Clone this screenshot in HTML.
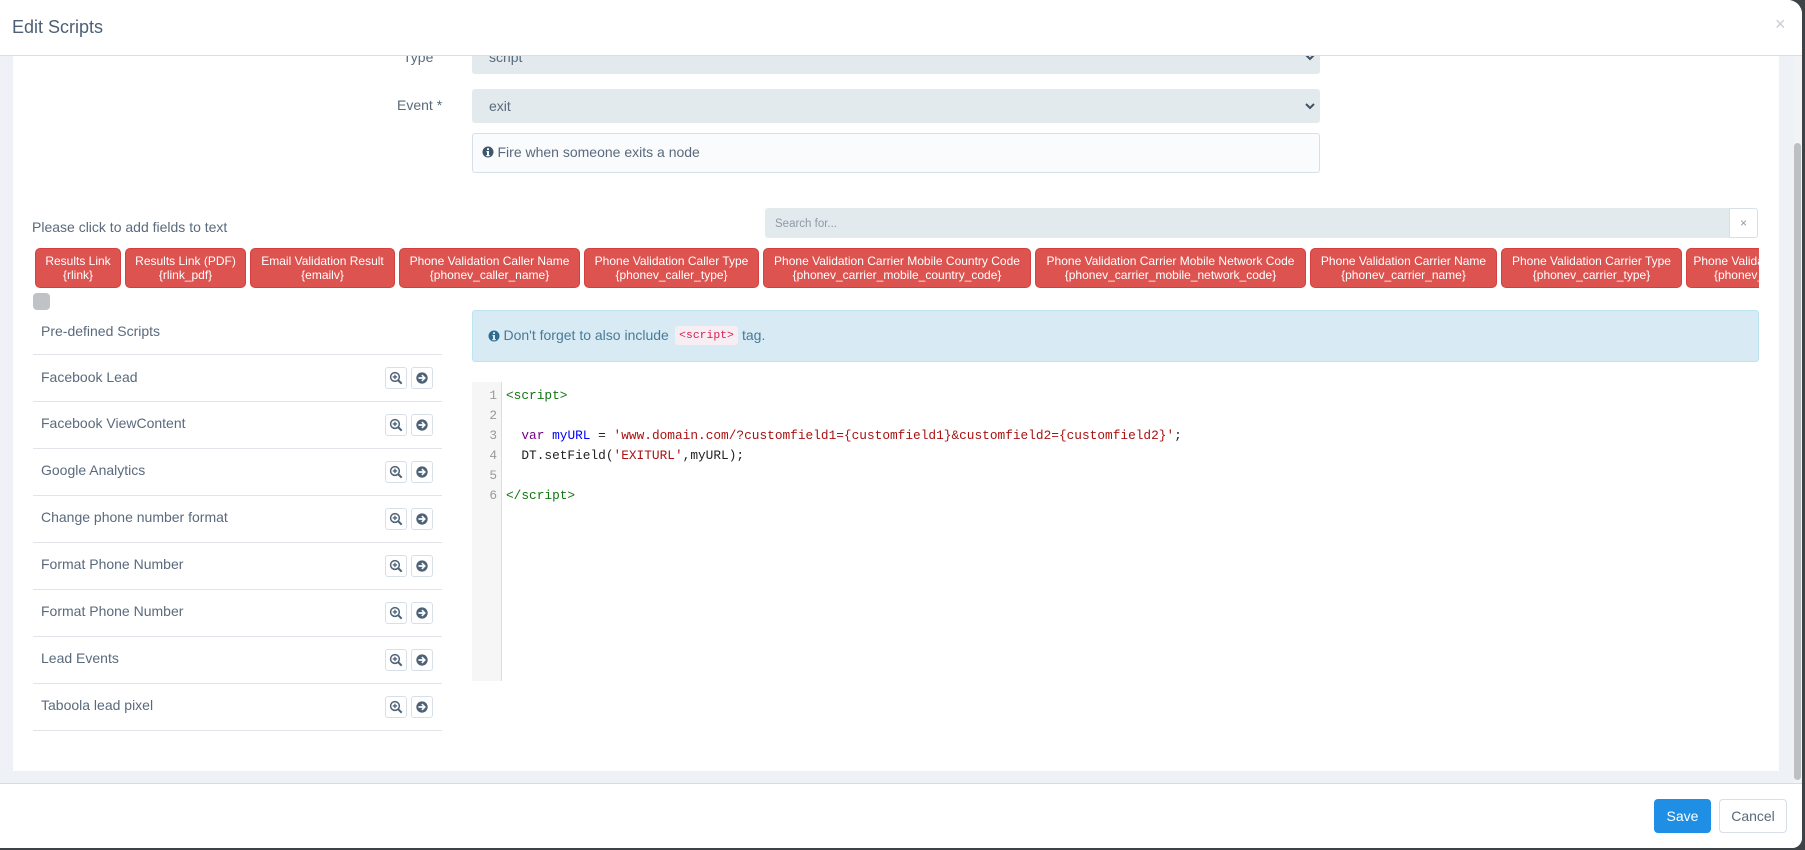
<!DOCTYPE html>
<html>
<head>
<meta charset="utf-8">
<title>Edit Scripts</title>
<style>
html,body{margin:0;padding:0;width:1805px;height:850px;overflow:hidden;background:#3d4347;}
body{font-family:"Liberation Sans",sans-serif;color:#5a6a7c;position:relative;}
.a{position:absolute;white-space:nowrap;}
#modal{position:absolute;left:0;top:0;width:1802px;height:848px;background:#eef2f6;border-radius:0 14px 10px 0;overflow:hidden;}
.sel{position:absolute;left:472px;width:848px;height:34px;background:#e3eaee;border-radius:3px;}
.t{position:absolute;font-size:14px;line-height:20px;white-space:nowrap;color:#5a6a7c;}
.b{position:absolute;top:0;height:38px;background:#dc5350;border:1px solid #d5403e;border-radius:5px;color:#fff;font-size:12px;line-height:14.3px;text-align:center;white-space:nowrap;box-sizing:content-box;}
.b span{display:block;padding-top:5px;}
.hl{position:absolute;left:33px;width:409px;height:1px;background:#e1e5ea;}
.ib{position:absolute;width:20px;height:20px;border:1px solid #d7dfe9;border-radius:3px;background:#fff;}
.ib svg{position:absolute;left:3px;top:3px;}
.ln{position:absolute;left:472px;width:25px;text-align:right;font:12.8px/20px "Liberation Mono",monospace;color:#999;}
.cd{position:absolute;left:506px;font:12.8px/20px "Liberation Mono",monospace;color:#222;white-space:pre;}
.g{color:#117711}.p{color:#770088}.v{color:#0000ff}.s{color:#aa1111}
</style>
</head>
<body>
<svg width="0" height="0" style="position:absolute">
<symbol id="info" viewBox="0 0 24 24"><path fill="currentColor" fill-rule="evenodd" d="M12 1a11 11 0 1 0 0 22a11 11 0 0 0 0-22zM10 4.500h4v3.500h-4zM9 10h5v8h1.500v2.500h-7V18H10v-5.500H9z"/></symbol>
<symbol id="zoom" viewBox="0 0 16 16"><path fill="none" stroke="#4d6277" stroke-width="1.700" d="M6.800 1.800a5 5 0 1 0 0 10a5 5 0 0 0 0-10z"/><path fill="none" stroke="#4d6277" stroke-width="2.400" d="M10.500 10.500L14.500 14.500"/><path fill="none" stroke="#4d6277" stroke-width="1.500" d="M4.300 6.800h5M6.800 4.300v5"/></symbol>
<symbol id="arrow" viewBox="0 0 16 16"><path fill="#4d6277" fill-rule="evenodd" d="M8 1.500a6.500 6.500 0 1 0 0 13a6.500 6.500 0 0 0 0-13zM8.500 4l4 4l-4 4l-1.300-1.300l1.700-1.700H4V7h4.900L7.200 5.300z"/></symbol>
</svg>

<div id="modal">
  <!-- body area -->
  <div class="a" style="left:13px;top:55px;width:1766px;height:716px;background:#fff;"></div>
  <div class="a" style="left:1794px;top:56px;width:8px;height:727px;background:#f1f3f5;"></div>
  <div class="a" style="left:1794px;top:143px;width:7px;height:637px;background:#bcc0c3;border-radius:4px;"></div>

  <!-- form -->
  <div class="t" style="left:403px;top:47px;">Type</div>
  <div class="sel" style="top:40px;"></div>
  <div class="t" style="left:489px;top:47px;">script</div>
  <svg class="a" style="left:1305px;top:53px;" width="10" height="8" viewBox="0 0 10 8"><path d="M1 2l4 4l4-4" fill="none" stroke="#3f5266" stroke-width="2"/></svg>

  <div class="t" style="left:397px;top:95px;">Event *</div>
  <div class="sel" style="top:89px;"></div>
  <div class="t" style="left:489px;top:96px;">exit</div>
  <svg class="a" style="left:1305px;top:102px;" width="10" height="8" viewBox="0 0 10 8"><path d="M1 2l4 4l4-4" fill="none" stroke="#3f5266" stroke-width="2"/></svg>

  <div class="a" style="left:472px;top:133px;width:846px;height:38px;background:#f9fbfd;border:1px solid #d7dfe9;border-radius:3px;"></div>
  <svg class="a" style="left:482px;top:146px;color:#3d566e;" width="12" height="12"><use href="#info"/></svg>
  <div class="t" style="left:497.500px;top:142px;">Fire when someone exits a node</div>

  <!-- fields -->
  <div class="t" style="left:32px;top:217px;">Please click to add fields to text</div>
  <div class="a" style="left:765px;top:208px;width:964px;height:30px;background:#e3eaee;border-radius:3px 0 0 3px;"></div>
  <div class="t" style="left:775px;top:214px;font-size:11.500px;color:#8d99a6;">Search for...</div>
  <div class="a" style="left:1729px;top:208px;width:27px;height:28px;background:#fff;border:1px solid #d7dfe9;border-radius:0 3px 3px 0;text-align:center;font-size:12px;line-height:28px;color:#8d99a6;">×</div>

  <div class="a" style="left:35px;top:248px;width:1724px;height:40px;overflow:hidden;">
    <div class="b" style="left:0;width:84px;"><span>Results Link<br>{rlink}</span></div>
    <div class="b" style="left:90px;width:119px;"><span>Results Link (PDF)<br>{rlink_pdf}</span></div>
    <div class="b" style="left:215px;width:143px;"><span>Email Validation Result<br>{emailv}</span></div>
    <div class="b" style="left:364px;width:179px;"><span>Phone Validation Caller Name<br>{phonev_caller_name}</span></div>
    <div class="b" style="left:549px;width:173px;"><span>Phone Validation Caller Type<br>{phonev_caller_type}</span></div>
    <div class="b" style="left:728px;width:266px;"><span>Phone Validation Carrier Mobile Country Code<br>{phonev_carrier_mobile_country_code}</span></div>
    <div class="b" style="left:1000px;width:269px;"><span>Phone Validation Carrier Mobile Network Code<br>{phonev_carrier_mobile_network_code}</span></div>
    <div class="b" style="left:1275px;width:185px;"><span>Phone Validation Carrier Name<br>{phonev_carrier_name}</span></div>
    <div class="b" style="left:1466px;width:179px;"><span>Phone Validation Carrier Type<br>{phonev_carrier_type}</span></div>
    <div class="b" style="left:1651px;width:180px;"><span>Phone Validation Country Code<br>{phonev_country_code}</span></div>
  </div>
  <div class="a" style="left:33px;top:293px;width:17px;height:17px;background:#bfc3c7;border-radius:4px;"></div>

  <!-- list -->
  <div class="t" style="left:41px;top:321px;">Pre-defined Scripts</div>
  <div class="hl" style="top:354px;"></div>
  <div class="t" style="left:41px;top:367px;">Facebook Lead</div>
  <div class="ib" style="left:385px;top:367px;"><svg width="14" height="14"><use href="#zoom"/></svg></div>
  <div class="ib" style="left:411px;top:367px;"><svg width="14" height="14"><use href="#arrow"/></svg></div>
  <div class="hl" style="top:401px;"></div>
  <div class="t" style="left:41px;top:413px;">Facebook ViewContent</div>
  <div class="ib" style="left:385px;top:414px;"><svg width="14" height="14"><use href="#zoom"/></svg></div>
  <div class="ib" style="left:411px;top:414px;"><svg width="14" height="14"><use href="#arrow"/></svg></div>
  <div class="hl" style="top:448px;"></div>
  <div class="t" style="left:41px;top:460px;">Google Analytics</div>
  <div class="ib" style="left:385px;top:461px;"><svg width="14" height="14"><use href="#zoom"/></svg></div>
  <div class="ib" style="left:411px;top:461px;"><svg width="14" height="14"><use href="#arrow"/></svg></div>
  <div class="hl" style="top:495px;"></div>
  <div class="t" style="left:41px;top:507px;">Change phone number format</div>
  <div class="ib" style="left:385px;top:508px;"><svg width="14" height="14"><use href="#zoom"/></svg></div>
  <div class="ib" style="left:411px;top:508px;"><svg width="14" height="14"><use href="#arrow"/></svg></div>
  <div class="hl" style="top:542px;"></div>
  <div class="t" style="left:41px;top:554px;">Format Phone Number</div>
  <div class="ib" style="left:385px;top:555px;"><svg width="14" height="14"><use href="#zoom"/></svg></div>
  <div class="ib" style="left:411px;top:555px;"><svg width="14" height="14"><use href="#arrow"/></svg></div>
  <div class="hl" style="top:589px;"></div>
  <div class="t" style="left:41px;top:601px;">Format Phone Number</div>
  <div class="ib" style="left:385px;top:602px;"><svg width="14" height="14"><use href="#zoom"/></svg></div>
  <div class="ib" style="left:411px;top:602px;"><svg width="14" height="14"><use href="#arrow"/></svg></div>
  <div class="hl" style="top:636px;"></div>
  <div class="t" style="left:41px;top:648px;">Lead Events</div>
  <div class="ib" style="left:385px;top:649px;"><svg width="14" height="14"><use href="#zoom"/></svg></div>
  <div class="ib" style="left:411px;top:649px;"><svg width="14" height="14"><use href="#arrow"/></svg></div>
  <div class="hl" style="top:683px;"></div>
  <div class="t" style="left:41px;top:695px;">Taboola lead pixel</div>
  <div class="ib" style="left:385px;top:696px;"><svg width="14" height="14"><use href="#zoom"/></svg></div>
  <div class="ib" style="left:411px;top:696px;"><svg width="14" height="14"><use href="#arrow"/></svg></div>
  <div class="hl" style="top:730px;"></div>

  <!-- alert -->
  <div class="a" style="left:472px;top:310px;width:1285px;height:50px;background:#d8ebf5;border:1px solid #bce4f1;border-radius:3px;"></div>
  <svg class="a" style="left:488px;top:330px;color:#2f6c8f;" width="12" height="12"><use href="#info"/></svg>
  <div class="t" style="left:503.500px;top:325px;color:#4a7a96;">Don't forget to also include</div>
  <div class="a" style="left:675px;top:326px;width:63px;height:19px;background:#f6eef3;border-radius:3px;text-align:center;font:11.400px/20px 'Liberation Mono',monospace;color:#d6204f;">&lt;script&gt;</div>
  <div class="t" style="left:742px;top:325px;color:#4a7a96;">tag.</div>

  <!-- code -->
  <div class="a" style="left:472px;top:382px;width:29px;height:299px;background:#f6f6f6;border-right:1px solid #ddd;"></div>
  <div class="ln" style="top:386px;">1</div>
  <div class="ln" style="top:406px;">2</div>
  <div class="ln" style="top:426px;">3</div>
  <div class="ln" style="top:446px;">4</div>
  <div class="ln" style="top:466px;">5</div>
  <div class="ln" style="top:486px;">6</div>
  <div class="cd g" style="top:386px;">&lt;script&gt;</div>
  <div class="cd" style="top:426px;">  <span class="p">var</span> <span class="v">myURL</span> = <span class="s">'www.domain.com/?customfield1={customfield1}&amp;customfield2={customfield2}'</span>;</div>
  <div class="cd" style="top:446px;">  DT.setField(<span class="s">'EXITURL'</span>,myURL);</div>
  <div class="cd g" style="top:486px;">&lt;/script&gt;</div>

  <!-- header -->
  <div class="a" style="left:0;top:0;width:1802px;height:55px;background:#fff;border-bottom:1px solid #d7dfe9;"></div>
  <div class="a" style="left:12px;top:14px;font-size:18px;line-height:26px;color:#4e6075;">Edit Scripts</div>
  <div class="a" style="left:1775px;top:13px;font-size:18px;line-height:22px;color:#c8ccd2;">×</div>

  <!-- footer -->
  <div class="a" style="left:0;top:783px;width:1802px;height:65px;background:#fff;border-top:1px solid #d5dce6;"></div>
  <div class="a" style="left:1654px;top:799px;width:57px;height:34px;background:#1f8fe6;border-radius:4px;color:#fff;text-align:center;font-size:14px;line-height:34px;">Save</div>
  <div class="a" style="left:1719px;top:799px;width:66px;height:32px;background:#fff;border:1px solid #d7dfe9;border-radius:4px;color:#5a6a7c;text-align:center;font-size:14px;line-height:32px;">Cancel</div>
</div>
</body>
</html>
